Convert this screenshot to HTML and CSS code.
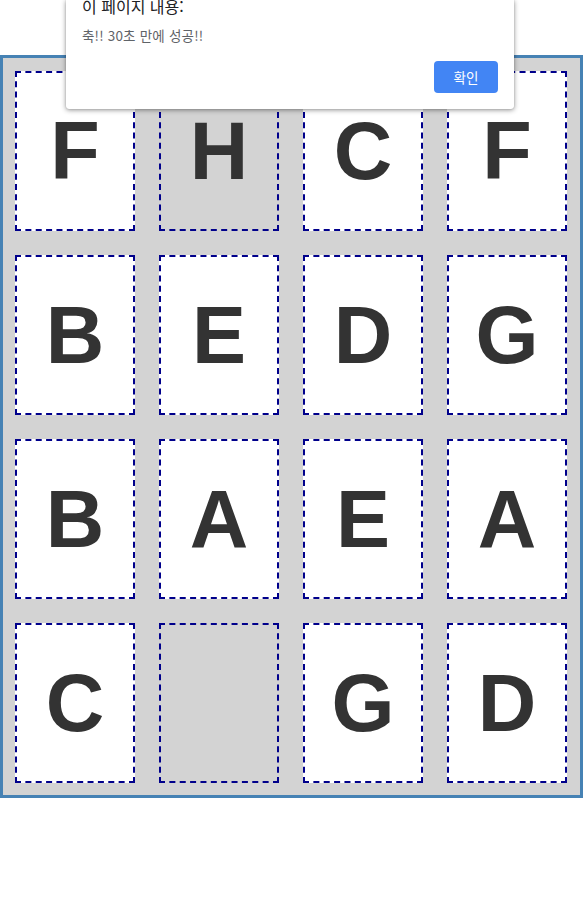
FILE: index.html
```html
<!DOCTYPE html>
<html lang="ko">
<head>
<meta charset="utf-8">
<title>Memory Game</title>
<link rel="stylesheet" href="styles.css">
</head>
<body>
<div class="board">
  <div class="card">F</div>
  <div class="card done">H</div>
  <div class="card">C</div>
  <div class="card">F</div>
  <div class="card">B</div>
  <div class="card">E</div>
  <div class="card">D</div>
  <div class="card">G</div>
  <div class="card">B</div>
  <div class="card">A</div>
  <div class="card">E</div>
  <div class="card">A</div>
  <div class="card">C</div>
  <div class="card done"></div>
  <div class="card">G</div>
  <div class="card">D</div>
</div>
<div class="alert">
  <div class="alert-title">이 페이지 내용:</div>
  <div class="alert-msg">축!! 30초 만에 성공!!</div>
  <div class="alert-actions"><button class="alert-btn">확인</button></div>
</div>
</body>
</html>
```
FILE: styles.css
```css
html, body {
  margin: 0;
  padding: 0;
  background: #fff;
}
body {
  font-family: "Liberation Sans", Arial, sans-serif;
}
.board {
  margin-top: 55px;
  width: 583px;
  box-sizing: border-box;
  border: 3px solid #4682b4;
  background: #d3d3d3;
  display: grid;
  grid-template-columns: repeat(4, 120px);
  grid-auto-rows: 160px;
  gap: 24px;
  padding: 13px 12px 12px 12px;
}
.card {
  box-sizing: border-box;
  border: 2px dashed #00008b;
  background: #fff;
  display: flex;
  align-items: center;
  justify-content: center;
  font-size: 81px;
  font-weight: bold;
  color: #333;
  line-height: 1;
}
.card.done {
  background: #d3d3d3;
}
.alert {
  position: absolute;
  left: 66px;
  top: 0;
  width: 448px;
  height: 109px;
  box-sizing: border-box;
  background: #fff;
  border-radius: 0 0 3px 3px;
  box-shadow: 0 1px 5px rgba(0, 0, 0, 0.45), 0 0 1px rgba(0, 0, 0, 0.3);
  padding: 0 16px 16px 16px;
  font-family: "Noto Sans CJK KR", "Noto Sans", sans-serif;
  display: flex;
  flex-direction: column;
}
.alert-title {
  font-size: 16px;
  line-height: 20px;
  margin-top: -4px;
  color: #202124;
}
.alert-msg {
  font-size: 13.5px;
  line-height: 20px;
  margin-top: 9px;
  color: #5f6368;
  letter-spacing: 0.2px;
}
.alert-actions {
  margin-top: auto;
  display: flex;
  justify-content: flex-end;
}
.alert-btn {
  width: 64px;
  height: 32px;
  border: none;
  border-radius: 4px;
  background: #4285f4;
  color: #fff;
  font-family: "Noto Sans CJK KR", "Noto Sans", sans-serif;
  font-size: 13.5px;
  padding: 0;
}
```
